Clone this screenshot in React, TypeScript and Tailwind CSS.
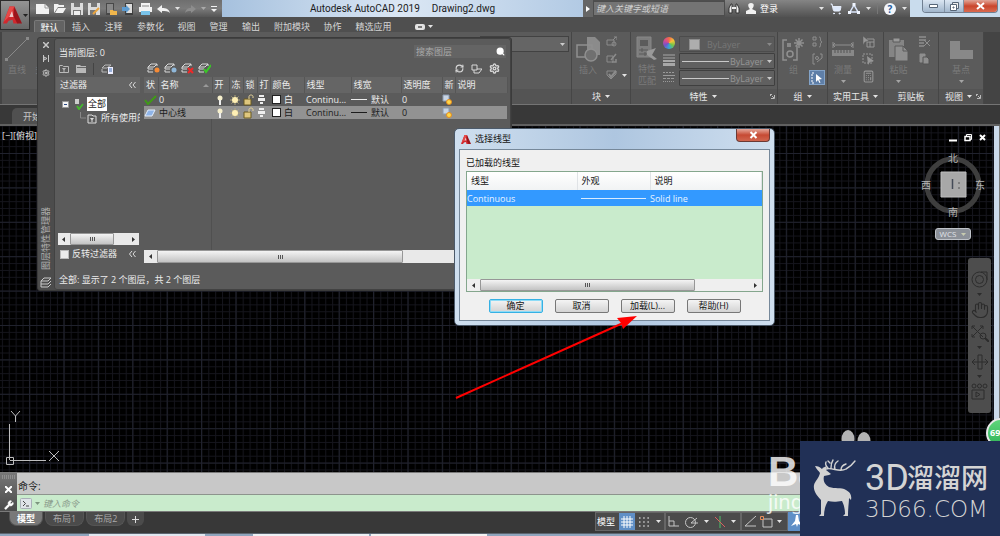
import type { ReactNode } from "react";
import { Calculator, Hand, RefreshCw, Search, Settings, ShoppingCart, Wrench } from "lucide-react";

const menuTabs = [
  { label: "默认", width: "w-[31px]" },
  { label: "插入", width: "w-[32px]" },
  { label: "注释", width: "w-[33px]" },
  { label: "参数化", width: "w-[41px]" },
  { label: "视图", width: "w-[31px]" },
  { label: "管理", width: "w-[33px]" },
  { label: "输出", width: "w-[32px]" },
  { label: "附加模块", width: "w-[50px]" },
  { label: "协作", width: "w-[31px]" },
  { label: "精选应用", width: "w-[51px]" },
];

const layerColumns = [
  { label: "状", width: "w-[14px]" },
  { label: "名称", width: "w-[54px]" },
  { label: "开", width: "w-[17px]" },
  { label: "冻", width: "w-[14px]" },
  { label: "锁", width: "w-[14px]" },
  { label: "打", width: "w-[13px]" },
  { label: "颜色", width: "w-[34px]" },
  { label: "线型", width: "w-[47px]" },
  { label: "线宽", width: "w-[50px]" },
  { label: "透明度", width: "w-[41px]" },
  { label: "新", width: "w-[13px]" },
  { label: "说明", width: "w-[52px]" },
];

const layers = [
  { name: "0", current: true },
  { name: "中心线", current: false },
];

type IconProps = { w: number; h: number; children: ReactNode; className?: string };

const Icon = ({ w, h, children, className = "" }: IconProps) => (
  <svg width={w} height={h} viewBox={`0 0 ${w} ${h}`} fill="none" stroke="currentColor" className={`shrink-0 ${className}`} aria-hidden="true">
    {children}
  </svg>
);

const Caret = ({ className = "text-[#e4e4e4]" }: { className?: string }) => (
  <Icon w={5} h={3} className={className}>
    <path d="M0 0h5L2.5 3z" fill="currentColor" stroke="none" />
  </Icon>
);

const AutocadMark = ({ className = "" }: { className?: string }) => (
  <svg viewBox="0 0 20 20" className={className} aria-hidden="true">
    <path d="M0 19 7 1h5l4 18h-5l-1-4-4 1-2 3z" fill="#d0282e" />
    <path d="M12 1 20 19h-5l-4-8z" fill="#9b151c" />
    <path d="m6.500 12 3-7 1.500 7z" fill="#efc4c4" />
    <path d="M7 1h5L6 12 1 17z" fill="#e64a48" />
  </svg>
);

/* ---------- Title bar ---------- */

const QuickAccess = () => (
  <div className="flex h-full w-[192px] items-center gap-[5px] bg-gradient-to-b from-[#6f6f6f] via-[#7b7b7b] to-[#565656] pl-[6px] text-[#f2f2f2]">
    <button aria-label="新建">
      <Icon w={13} h={11}><path d="M0 1h9l4 4v6H0z" fill="currentColor" stroke="none" /><path d="M9 1v4h4" stroke="#999" /></Icon>
    </button>
    <button aria-label="打开">
      <Icon w={12} h={11}><path d="M0 1h4l1 1h5v2H4L0 10z" fill="currentColor" stroke="none" /><path d="M4 5h8l-3 5H1z" fill="currentColor" stroke="none" /></Icon>
    </button>
    <button aria-label="保存">
      <Icon w={12} h={12}><path d="M0 0h12v12H0z" fill="#dcdcdc" stroke="none" /><path d="M3 0h6v4H3zM2 7h8v5H2z" fill="#777" stroke="none" /><path d="M3 8h6v4H3z" fill="#eee" stroke="none" /></Icon>
    </button>
    <button aria-label="另存为">
      <Icon w={12} h={12}><path d="M0 0h12v12H0z" fill="#dcdcdc" stroke="none" /><path d="M3 0h6v4H3zM2 7h6v5H2z" fill="#777" stroke="none" /><path d="m5 11 6-6" stroke="#e8a33e" strokeWidth="2" /></Icon>
    </button>
    <button aria-label="从移动设备打开">
      <Icon w={12} h={12}><path d="M1 0h8v12H1z" fill="#484848" stroke="none" /><path d="M2 1h6v9H2z" fill="#888" stroke="none" /><path d="M5 7h3l1 1h3v4H5z" fill="#f0b64c" stroke="none" /></Icon>
    </button>
    <button aria-label="保存到移动设备">
      <Icon w={12} h={12}><path d="M3 0h8v12H3z" fill="#3f3f3f" stroke="none" /><path d="M4 1h6v9H4z" fill="#ddd" stroke="none" /><path d="M0 4h4V2l4 4-4 4V8H0z" fill="#5d9bd0" stroke="none" /></Icon>
    </button>
    <button aria-label="打印">
      <Icon w={13} h={12}><path d="M2 0h9v4H2zM0 4h13v5H0z" fill="currentColor" stroke="none" /><path d="M2 8h9v4H2z" fill="#79c3ea" stroke="none" /><path d="M3 3h7" stroke="#888" /></Icon>
    </button>
    <button aria-label="放弃">
      <Icon w={13} h={8}><path d="m0 4 5-4v3c4 0 7 1 8 5-2-2-5-2-8-2v2z" fill="currentColor" stroke="none" /></Icon>
    </button>
    <Caret />
    <button aria-label="重做">
      <Icon w={11} h={8} className="text-[#8d8d8d]"><path d="m11 4-5-4v3C3 3 1 4 0 8c2-2 3-2 6-2v2z" fill="currentColor" stroke="none" /></Icon>
    </button>
    <Caret className="text-[#aaa]" />
    <Icon w={6} h={6}><path d="M0 .500h6" /><path d="M0 3h6L3 6z" fill="currentColor" stroke="none" /></Icon>
  </div>
);

const TitleBar = () => (
  <div className="flex h-[17px] items-center">
    <QuickAccess />
    <div className="flex h-full flex-1 items-center justify-center gap-[12px] bg-gradient-to-r from-[#a6c1de] via-[#dbe7f4] to-[#b2cae4] text-[10px] leading-[17px] text-[#1b1b1b] [font-family:Roboto,sans-serif]">
      <span>Autodesk AutoCAD 2019</span>
      <span>Drawing2.dwg</span>
    </div>
    <button aria-label="展开搜索" className="flex h-full w-[10px] items-center justify-center bg-[#666]">
      <Icon w={4} h={6}><path d="M0 0v6l4-3z" fill="#fff" stroke="none" /></Icon>
    </button>
    <input aria-label="搜索" placeholder="键入关键字或短语" className="h-[15px] w-[132px] border border-[#4d4d4d] bg-[#747474] pl-[2px] text-[9px] italic leading-[13px] text-white placeholder:text-[#d2d2d2]" />
    <div className="flex h-full w-[185px] items-center gap-[6px] bg-gradient-to-b from-[#858585] to-[#525252] px-[3px] text-white">
      <Icon w={12} h={11}><path d="M1 10V5l2-4h1v9zM11 10V5L9 1H8v9z" fill="#eee" stroke="#333" /><path d="M4 5h4" stroke="#eee" strokeWidth="2" /></Icon>
      <button className="flex items-center gap-[4px] text-[9px] leading-[15px]">
        <Icon w={10} h={11}><path d="M5 0c4 0 3 4 1 6l4 2v3H0V8l4-2C2 4 1 0 5 0z" fill="#f1f1f1" stroke="none" /></Icon>
        登录
      </button>
      <span className="flex-1" />
      <Caret />
      <ShoppingCart size={12} fill="#dfe9fa" className="text-[#e6edfb]" />
      <Icon w={12} h={11}><path d="M6 2 2 9h8z" stroke="#dbe6fb" strokeWidth="1.500" /><path d="M4.500 0h3v3h-3zM0 8h3v3H0zM9 8h3v3H9z" fill="#f0f5ff" stroke="none" /></Icon>
      <Caret />
      <span className="h-[11px] w-px bg-[#777]" />
      <button aria-label="帮助" className="flex h-[12px] w-[12px] items-center justify-center rounded-full bg-[#f3f6fb] text-[10px] font-bold leading-[12px] text-[#2a5c9c]">?</button>
      <Caret />
    </div>
    <div className="flex h-full w-[90px] items-start justify-end bg-[#c9dced] pr-[2px]">
      <div className="flex h-[13px] overflow-hidden rounded-b-[4px] border border-t-0 border-[#707f91]">
        <button aria-label="最小化" className="flex w-[21px] items-center justify-center bg-gradient-to-b from-[#dbe6f2] to-[#a1b6cc]">
          <Icon w={9} h={4}><path d="M.500.500h8v3h-8z" fill="#fff" stroke="#566577" /></Icon>
        </button>
        <button aria-label="还原" className="flex w-[19px] items-center justify-center border-l border-[#8293a5] bg-gradient-to-b from-[#dbe6f2] to-[#a1b6cc]">
          <Icon w={9} h={9}><path d="M2.500.500h6v6h-6z" fill="#eee" stroke="#566577" /><path d="M.500 2.500h6v6h-6z" fill="#fff" stroke="#566577" /><path d="M3 5h1v1H3z" stroke="#566577" /></Icon>
        </button>
        <button aria-label="关闭" className="flex w-[34px] items-center justify-center border-l border-[#8293a5] bg-gradient-to-b from-[#e0a598] via-[#c9452c] to-[#d96a50]">
          <Icon w={9} h={8}><path d="m1 1 7 6M8 1 1 7" stroke="#fff" strokeWidth="2" /></Icon>
        </button>
      </div>
    </div>
  </div>
);

const MenuTabs = () => (
  <nav className="flex h-[16px] items-end bg-[#4f4f4f] pl-[4px] text-[9px] leading-[13px] text-[#d6d6d6]">
    {menuTabs.map((tab, i) => (
      <button
        key={tab.label}
        className={`${tab.width} h-[13px] shrink-0 whitespace-nowrap ${i === 0 ? "rounded-t-[2px] border border-b-0 border-[#7a7a7a] bg-[#636363] leading-[11px] text-white" : ""}`}
      >
        {tab.label}
      </button>
    ))}
    <button aria-label="功能区选项" className="ml-[16px] flex h-[13px] items-center gap-[3px]">
      <Icon w={10} h={6}><rect width="10" height="6" rx="2" fill="#e3e3e3" stroke="none" /><path d="M3 2h4v2H3z" fill="#777" stroke="none" /></Icon>
      <Caret />
    </button>
  </nav>
);

/* ---------- Ribbon ---------- */

type PanelProps = { title: string; width: string; caret?: boolean; launcher?: boolean; children: ReactNode };

const RibbonPanel = ({ title, width, caret = true, launcher = false, children }: PanelProps) => (
  <section className={`${width} flex shrink-0 flex-col border-r border-[#464646] bg-[#5b5b5b]`}>
    <div className="flex flex-1 gap-[4px] px-[4px] pt-[4px] text-[9px] leading-[12px] text-[#787878]">{children}</div>
    <div className="flex h-[15px] items-center justify-center gap-[4px] whitespace-nowrap bg-[#545454] text-[9px] leading-[14px] text-[#e8e8e8]">
      {launcher && <span className="flex-1" />}
      {title}
      {caret && <Caret />}
      {launcher && (
        <span className="flex flex-1 justify-end pr-[2px]">
          <Icon w={5} h={5}><path d="M0 .500h2M.500 0v2M2 2l2 2M4.500 1v3.500H1" stroke="#bbb" /></Icon>
        </span>
      )}
    </div>
  </section>
);

const BigButton = ({ label, caret = false, children }: { label: string; caret?: boolean; children: ReactNode }) => (
  <button className="flex h-[50px] flex-col items-center text-[#909090]">
    <span className="flex h-[26px] items-center">{children}</span>
    <span className="mt-[2px] whitespace-nowrap text-[#7a7a7a]">{label}</span>
    {caret && <span className="mt-[4px]"><Caret className="text-[#a5a5a5]" /></span>}
  </button>
);

const LineSelect = ({ label }: { label: string }) => (
  <div className="flex h-[16px] items-center gap-[1px] rounded-[1px] border border-[#3f3f3f] bg-[#606060] pl-[2px] pr-[2px]">
    <span className="h-px w-[47px] shrink-0 bg-[#c9c9c9]" />
    <select aria-label={label} className="min-w-0 flex-1 appearance-none bg-transparent text-[9px] leading-[13px] text-[#969696]">
      <option>ByLayer</option>
    </select>
    <Caret className="text-[#c9c9c9]" />
  </div>
);

const Ribbon = () => (
  <div className="flex h-[73px] border-b border-[#747474] bg-[#444] pl-[2px] pr-[16px]">
    <section className="flex min-w-0 flex-1 flex-col overflow-hidden bg-[#5b5b5b]">
      <div className="flex flex-1 gap-[6px] px-[3px] pt-[4px] text-[9px] leading-[12px] text-[#7a7a7a]">
        <BigButton label="直线">
          <Icon w={24} h={25} className="text-[#8a8a8a]"><path d="M2 22 22 2" /><path d="M0 21h3v3H0zM21 0h3v3h-3z" fill="currentColor" stroke="none" /></Icon>
        </BigButton>
        <BigButton label="多段线">
          <Icon w={24} h={25} className="text-[#8a8a8a]"><path d="M2 18h10c8 0 8-14 0-14" /></Icon>
        </BigButton>
      </div>
      <div className="h-[15px] bg-[#545454]" />
    </section>
    <section className="flex w-[94px] shrink-0 flex-col border-r border-[#464646] bg-[#5b5b5b]">
      <div className="flex-1 px-[2px] pt-[4px]">
        <div className="flex h-[16px] items-center border border-[#424242] bg-[#656565] px-[3px]">
          <select aria-label="图层" className="min-w-0 flex-1 appearance-none bg-transparent text-[9px]"><option /></select>
          <Caret className="text-[#ccc]" />
        </div>
      </div>
      <div className="h-[15px] bg-[#545454]" />
    </section>
    <RibbonPanel title="块" width="w-[59px]">
      <BigButton label="插入">
        <Icon w={24} h={25}><path d="M11 0h8l5 5v13H11z" fill="#8b8b8b" stroke="none" /><path d="M1 8h15v12H1z" strokeWidth="1.500" /><circle cx="15" cy="18" r="6" fill="#707070" strokeWidth="1.500" /></Icon>
      </BigButton>
      <div className="flex flex-col items-start gap-[6px] pl-[2px] text-[#8c8c8c]">
        <Icon w={11} h={11}><path d="M1 4h7v5H1zM7 4l3-3M8 1h3v3" /><circle cx="8" cy="8" r="2" /></Icon>
        <Icon w={11} h={11}><path d="M1 3h6v6H1z" /><path d="m5 7 5-6M6 9h4V6" strokeWidth="1.500" /></Icon>
        <span className="flex items-center gap-[5px]">
          <Icon w={11} h={11}><path d="M1 1h9v3L5 9 1 5z" /><path d="m3 4 2 3 5-6" strokeWidth="2" /></Icon>
          <Caret />
        </span>
      </div>
    </RibbonPanel>
    <RibbonPanel title="特性" width="w-[147px]" launcher>
      <button className="flex w-[24px] shrink-0 flex-col items-center text-[#888]">
        <Icon w={22} h={24}><path d="M1 1h14v20H1z" fill="#7d7d7d" /><path d="M4 4h8v6H4z" fill="#5b5b5b" stroke="none" /><path d="M3 14h9M3 18h9M6 12v4M9 16v4" stroke="#5b5b5b" /><path d="m11 15 9-3-4 7 5 4-3 1-7-5z" fill="#999" stroke="none" /></Icon>
        <span className="mt-[3px] text-[#7a7a7a]">特性</span>
        <span className="text-[#7a7a7a]">匹配</span>
      </button>
      <div className="flex shrink-0 flex-col gap-[5px] pt-[1px]">
        <span className="h-[12px] w-[12px] rounded-full bg-[conic-gradient(#f26a4b,#f6c338,#73c54a,#36a5d8,#7353c9,#d44b91,#f26a4b)]" />
        <Icon w={12} h={12} className="text-[#a8a8a8]"><path d="M0 1h12M0 4h12" /><path d="M0 7h12" strokeWidth="2" /><path d="M0 10.500h12" strokeWidth="3" /></Icon>
        <Icon w={12} h={12} className="text-[#9a9a9a]"><path d="M0 1.500h12" strokeDasharray="2 1" /><path d="M0 4.500h12" /><path d="M0 7.500h12" strokeDasharray="3 1" /><path d="M0 10.500h12" strokeDasharray="1 1" /></Icon>
      </div>
      <div className="flex min-w-0 flex-1 flex-col gap-[1px] -mr-[2px]">
        <div className="flex h-[16px] items-center gap-[7px] rounded-[1px] border border-[#4c4c4c] pl-[9px] pr-[2px]">
          <span className="h-[11px] w-[11px] shrink-0 border border-[#8c8c8c] bg-[#adadad]" />
          <select aria-label="对象颜色" className="min-w-0 flex-1 appearance-none bg-transparent text-[9px] leading-[13px] text-[#777]">
            <option>ByLayer</option>
          </select>
          <Caret className="text-[#888]" />
        </div>
        <LineSelect label="线宽" />
        <LineSelect label="线型" />
      </div>
    </RibbonPanel>
    <RibbonPanel title="组" width="w-[50px]">
      <BigButton label="组">
        <Icon w={23} h={25}><path d="M5 3H1v20h4M11 23h4V9" strokeWidth="1.500" /><path d="M5 6h4v4H5z" fill="#888" stroke="none" /><circle cx="8" cy="17" r="3" strokeWidth="1.500" /><path d="M17 1v10M12 6h10M13.500 2.500l7 7M20.500 2.500l-7 7" strokeWidth="1.500" /></Icon>
      </BigButton>
      <div className="flex flex-col items-center gap-[5px] text-[#8f8f8f]">
        <Icon w={11} h={12}><path d="M1 1h3v3H1zM1 7h3v3H1zM7 1c3 0 0 4 3 5-3 1 0 5-3 5" /></Icon>
        <Icon w={11} h={12}><path d="M3 1H1v10h2M8 1h2v4M5 9l5-4" /><circle cx="5" cy="5" r="1.500" /></Icon>
        <span className="flex h-[15px] w-[16px] items-center justify-center border border-[#83a3c8] bg-[#5f7fa8] text-white">
          <Icon w={12} h={12}><path d="M3 1H1v10h2" strokeDasharray="2 1" /><path d="m5 2 6 5-3 .500 1.500 3-1 .500-1.500-3L5 10z" fill="currentColor" stroke="none" /></Icon>
        </span>
      </div>
    </RibbonPanel>
    <RibbonPanel title="实用工具" width="w-[56px]">
      <BigButton label="测量" caret>
        <Icon w={22} h={14}><path d="M1 0v6M21 0v6M1 3h20M3 1 1 3l2 2M19 1l2 2-2 2" /><path d="M0 8h22v6H0z" fill="#888" stroke="none" /><path d="M3 8v3M6 8v3M9 8v3M12 8v3M15 8v3M18 8v3" stroke="#555" /></Icon>
      </BigButton>
      <div className="flex flex-col items-center gap-[5px] pl-[4px] text-[#979797]">
        <Icon w={13} h={12}><path d="M5 3h7v8H5zM5 6h7M8 6v5" /><path d="m1 0 6 5-4 1-2 3z" fill="currentColor" stroke="#5b5b5b" strokeWidth=".5" /></Icon>
        <Icon w={13} h={12}><path d="M1 1h9v9H1z" strokeDasharray="2 1" /><path d="m5 3 7 5-4 1-2 3z" fill="currentColor" stroke="none" /></Icon>
        <Calculator size={13} />
      </div>
    </RibbonPanel>
    <RibbonPanel title="剪贴板" width="w-[55px]" caret={false}>
      <BigButton label="粘贴" caret>
        <Icon w={21} h={25}><path d="M1 3h15v17H1z" fill="#858585" stroke="none" /><path d="M5 1h7v4H5z" fill="#999" stroke="#5b5b5b" /><path d="M7 9h8l5 5v10H7z" fill="#8f8f8f" stroke="#5b5b5b" /><path d="M15 9v5h5" stroke="#5b5b5b" /></Icon>
      </BigButton>
      <div className="flex flex-col gap-[5px] pl-[6px] text-[#8f8f8f]">
        <Icon w={12} h={12}><path d="M0 1h7M0 4h7M0 7h5M0 10h5" strokeWidth="1.500" /><path d="m5 4 6 6M11 4 5 10" /></Icon>
        <Icon w={11} h={12}><path d="M1 1h5v8H1z" fill="currentColor" /><path d="M4 4h4l2 2v5H4z" fill="currentColor" stroke="#555" /></Icon>
      </div>
    </RibbonPanel>
    <RibbonPanel title="视图" width="w-[45px]" launcher>
      <div className="flex flex-1 justify-center">
        <BigButton label="基点" caret>
          <Icon w={24} h={19}><path d="M1 1h10v9h13v9H1z" fill="#888" stroke="none" /></Icon>
        </BigButton>
      </div>
    </RibbonPanel>
  </div>
);

/* ---------- Layer palette ---------- */

const Stack = ({ mark }: { mark: ReactNode }) => (
  <Icon w={13} h={11} className="text-[#dadada]">
    <path d="M4 1h6L7 4H1zM1 6h5M1 9h5M7 4l3-3v2M1 4v2M1 7v2" />
    {mark}
  </Icon>
);

const ScrollThumb = ({ className }: { className: string }) => (
  <div className={`${className} flex h-full items-center justify-center rounded-[1px] border border-[#979797] bg-gradient-to-b from-[#f4f4f4] to-[#c3c3c3]`}>
    <Icon w={5} h={4}><path d="M.500 0v4M2.500 0v4M4.500 0v4" stroke="#555" /></Icon>
  </div>
);

const ArrowLeft = () => <Icon w={3} h={5}><path d="M3 0v5L0 2.500z" fill="#333" stroke="none" /></Icon>;
const ArrowRight = () => <Icon w={3} h={5}><path d="M0 0v5l3-2.500z" fill="#333" stroke="none" /></Icon>;

const LayerFilters = () => (
  <div className="flex w-[84px] shrink-0 flex-col overflow-hidden">
    <div className="flex h-[16px] items-center justify-between bg-[#656565] px-[4px] leading-[14px]">
      过滤器
      <Icon w={7} h={6}><path d="M3 0 .500 3 3 6M6.500 0 4 3l2.500 3" stroke="#ddd" /></Icon>
    </div>
    <ul className="flex flex-1 flex-col pt-[4px]">
      <li className="flex h-[14px] items-center gap-[3px] pl-[6px]">
        <Icon w={7} h={7}><path d="M.500.500h6v6h-6z" fill="#f3f3f3" stroke="#999" /><path d="M2 3.500h3" stroke="#2b4a86" /></Icon>
        <Icon w={12} h={12}><path d="M3 1h4v5H3z" fill="#ccc" stroke="none" /><path d="m5 8 2 3 4-5" stroke="#45b52e" strokeWidth="2" /></Icon>
        <span className="h-[14px] bg-white px-[1px] leading-[13px] text-[#222]">全部</span>
      </li>
      <li className="flex h-[14px] items-center gap-[4px] whitespace-nowrap pl-[24px]">
        <Icon w={17} h={12}><path d="M.500 0v6H6" stroke="#888" /><path d="M8 3h4l1 1h3v7H8z" stroke="#ddd" /><path d="M10 6h4l-1.500 2v2h-1V8z" fill="#ddd" stroke="none" /></Icon>
        所有使用的
      </li>
    </ul>
    <div className="ml-[2px] mr-[1px] flex h-[12px] items-center bg-[#e9e9e9] px-[4px]">
      <ArrowLeft />
      <ScrollThumb className="ml-[5px] w-[44px]" />
      <span className="flex-1" />
      <ArrowRight />
    </div>
    <div className="flex h-[18px] items-center justify-between px-[4px]">
      <label className="flex items-center gap-[3px] leading-[14px]">
        <input type="checkbox" className="h-[9px] w-[9px] appearance-none border border-[#bbb] bg-[#ececec]" />
        反转过滤器
      </label>
      <Icon w={7} h={6}><path d="M3 0 .500 3 3 6M6.500 0 4 3l2.500 3" stroke="#ddd" /></Icon>
    </div>
  </div>
);

const LayerTable = () => (
  <div className="flex w-[363px] flex-col">
    <table className="w-[363px] table-fixed border-collapse text-left">
      <thead>
        <tr className="h-[16px] bg-[#656565]">
          {layerColumns.map((col) => (
            <th key={col.label} className={`${col.width} overflow-hidden whitespace-nowrap border-r border-[#565656] p-0 pl-[2px] font-normal leading-[14px]`}>
              {col.label === "名称" ? (
                <span className="flex items-center justify-between pr-[3px]">
                  {col.label}
                  <Icon w={6} h={3}><path d="M0 3h6L3 0z" fill="#999" stroke="none" /></Icon>
                </span>
              ) : col.label}
            </th>
          ))}
        </tr>
      </thead>
      <tbody>
        {layers.map((layer) => (
          <tr key={layer.name} className={`h-[13px] leading-[13px] [&>td]:overflow-hidden [&>td]:whitespace-nowrap [&>td]:p-0 [&_svg]:block ${layer.current ? "" : "bg-[#929292] text-[#1c1c1c]"}`}>
            <td>
              {layer.current ? (
                <Icon w={13} h={10}><path d="m1 5 3 4 8-8" stroke="#3f9a17" strokeWidth="2" /></Icon>
              ) : (
                <Icon w={12} h={8}><path d="M4 1h7L8 7H1z" fill="#8fb4e8" stroke="#e5eefb" /></Icon>
              )}
            </td>
            <td><span className="pl-[1px]">{layer.name}</span></td>
            <td>
              <Icon w={17} h={12}><circle cx="8" cy="4" r="2.500" fill="#f6efcc" stroke="none" /><path d="M7 6h2v5H7z" fill="#eee" stroke="none" /></Icon>
            </td>
            <td>
              <Icon w={13} h={12}><path d="M6 1v10M1 6h10M2.500 2.500l7 7M9.500 2.500l-7 7" stroke="#b3a97c" /><circle cx="6" cy="6" r="3" fill="#fff0b4" stroke="none" /></Icon>
            </td>
            <td>
              <Icon w={12} h={12}><path d="M1 5h7v6H1z" fill="#dfc77e" stroke="#6b5a22" /><path d="M6 5V2.500c0-2 4-2 4 0V4" stroke="#e8d59a" /></Icon>
            </td>
            <td>
              <Icon w={10} h={11}><path d="M2 1h5v2H2zM1 4h7v3H1zM3 8h3v2H3z" fill="#eee" stroke="none" /></Icon>
            </td>
            <td>
              <span className="flex items-center gap-[3px] pl-[2px]">
                <span className="h-[9px] w-[9px] border border-[#222] bg-white" />白
              </span>
            </td>
            <td><span className="pl-[2px]">Continu...</span></td>
            <td>
              <span className="flex items-center gap-[4px]"><span className="h-px w-[16px] bg-current" />默认</span>
            </td>
            <td><span className="pl-[1px]">0</span></td>
            <td>
              <Icon w={12} h={11}><path d="M1 1h6v6H1z" fill="#c9d5e4" stroke="#8c9bb0" /><circle cx="7" cy="8" r="2.500" fill="#ffd84a" stroke="#e58d1e" /></Icon>
            </td>
            <td />
          </tr>
        ))}
      </tbody>
    </table>
    <div className="ml-[67px] flex-1 border-l border-[#505050]" />
    <div className="flex h-[13px] items-center bg-[#e9e9e9] pl-[5px]">
      <ArrowLeft />
      <ScrollThumb className="ml-[5px] w-[246px]" />
    </div>
  </div>
);

const LayerPalette = () => (
  <aside className="absolute left-[37px] top-[37px] flex h-[254px] w-[475px] rounded-[3px] border border-[#3b3b3b] bg-[#4c4c4c] text-[9px] text-[#ececec]">
    <div className="flex w-[16px] shrink-0 flex-col items-center gap-[7px] pb-[2px] pt-[4px] text-[#c8c8c8]">
      <button aria-label="关闭选项板"><Icon w={6} h={6}><path d="m0 0 6 6M6 0 0 6" strokeWidth="1.500" /></Icon></button>
      <button aria-label="自动隐藏"><Icon w={6} h={7}><path d="M.500 0v7M5.500 0v7M1 2l3 1.500L1 5z" /></Icon></button>
      <button aria-label="特性"><Settings size={8} strokeWidth={3} /></button>
      <span className="flex-1" />
      <span className="rotate-180 leading-[12px] text-[#b0b0b0] [text-orientation:sideways] [writing-mode:vertical-rl]">图层特性管理器</span>
      <Icon w={12} h={11}><path d="M4 1h7L8 4H1zM1 7h7l3-3M1 10h7l3-3M1 4v6" /></Icon>
    </div>
    <div className="flex min-w-0 flex-1 flex-col rounded-[3px] border border-[#424242] bg-[#5b5b5b] pr-[4px]">
      <div className="flex items-center justify-between pl-[4px] pt-[4px]">
        <span className="pt-[3px] leading-[14px]">当前图层: 0</span>
        <div className="flex h-[13px] w-[92px] items-center bg-[#646464] pr-px">
          <input aria-label="搜索图层" placeholder="搜索图层" className="h-full min-w-0 flex-1 bg-transparent pl-[2px] leading-[13px] placeholder:text-[#aaa]" />
          <Search size={9} strokeWidth={3} fill="#fff" className="text-white" />
        </div>
      </div>
      <div className="flex h-[17px] items-center pl-[4px] text-[#b9b9b9]">
        <div className="flex items-center gap-[7px]">
          <Icon w={10} h={9}><path d="M.500 1.500h3l1 1h5v6h-9z" /><path d="M3 4h4L5.500 6v2h-1V6z" fill="currentColor" stroke="none" /></Icon>
          <Icon w={10} h={9}><path d="M0 1h4l1 1h5v7H0z" fill="currentColor" stroke="none" /><path d="M1 3.500h9" stroke="#666" /></Icon>
          <span className="h-[12px] w-px bg-[#444]" />
          <Icon w={12} h={10}><path d="M4 1h6L6 4H1zM1 5v3h5" /><path d="M7 3h5v7H7z" fill="#eef" stroke="none" /><path d="M8 5h3M8 7h3" stroke="#4372b5" /></Icon>
        </div>
        <div className="ml-[34px] flex items-center gap-[4px]">
          <Stack mark={<circle cx="10" cy="7" r="2.500" fill="#f58a35" stroke="none" />} />
          <Stack mark={<circle cx="10" cy="7" r="2.500" fill="#8fb7d9" stroke="none" />} />
          <Stack mark={<path d="m7 5 5 5M12 5l-5 5" stroke="#f02828" strokeWidth="2" />} />
          <Stack mark={<path d="m6 6 2 3 5-7" stroke="#39c826" strokeWidth="2" />} />
        </div>
        <div className="ml-auto flex items-center gap-[7px] pr-[6px] text-[#d8d8d8]">
          <RefreshCw size={9} strokeWidth={3} />
          <Icon w={11} h={10}><path d="M1 1h5v5H1zM3 6v3h5l3-4H6" /></Icon>
          <Settings size={11} strokeWidth={3} />
        </div>
      </div>
      <div className="flex min-h-0 flex-1 gap-[4px] pl-[1px]">
        <LayerFilters />
        <LayerTable />
      </div>
      <p className="h-[26px] pl-[4px] pt-[10px] leading-[14px]">全部: 显示了 2 个图层，共 2 个图层</p>
    </div>
  </aside>
);

/* ---------- Linetype dialog ---------- */

const dialogButtons = ["确定", "取消", "加载(L)...", "帮助(H)"];

const LinetypeDialog = () => (
  <div role="dialog" aria-label="选择线型" className="absolute left-[454px] top-[128px] flex h-[198px] w-[321px] flex-col rounded-[5px] border border-[#4c5a6a] bg-gradient-to-r from-[#cfdfef] via-[#aec6e0] to-[#cfdfef] px-[4px] pb-[4px] text-[9px] text-[#151515]">
    <header className="flex h-[20px] items-start justify-between">
      <span className="flex h-full items-center gap-[4px] pl-[2px]"><AutocadMark className="h-[11px] w-[10px]" />选择线型</span>
      <button aria-label="关闭" className="flex h-[13px] w-[34px] items-center justify-center rounded-b-[4px] border border-t-0 border-[#6b3a35] bg-gradient-to-b from-[#e3a79b] via-[#c64a33] to-[#d0664f]">
        <Icon w={9} h={8}><path d="m1.500 1 6 6M7.500 1l-6 6" stroke="#fff" strokeWidth="2" /></Icon>
      </button>
    </header>
    <div className="flex min-h-0 flex-1 flex-col border border-[#76889a] bg-[#f0f0f0] px-[6px] pt-[6px]">
      <p className="h-[15px] leading-[14px]">已加载的线型</p>
      <div className="flex h-[121px] flex-col border border-[#84a68d] bg-[#c9ebcc]">
        <table className="w-full table-fixed border-collapse text-left">
          <thead>
            <tr className="h-[18px] bg-gradient-to-b from-white to-[#f1f3f4] [&>th]:border-r [&>th]:border-[#e0e3e6] [&>th]:p-0 [&>th]:font-normal">
              <th className="w-[110px]"><span className="pl-[4px]">线型</span></th>
              <th className="w-[73px]"><span className="pl-[4px]">外观</span></th>
              <th><span className="pl-[4px]">说明</span></th>
            </tr>
          </thead>
          <tbody>
            <tr className="h-[16px] bg-[#3399ff] leading-[15px] text-[#eaf4ff] [&>td]:p-0">
              <td>Continuous</td>
              <td><span className="ml-[4px] block h-px w-[65px] bg-[#d8ebff]" /></td>
              <td>Solid line</td>
            </tr>
          </tbody>
        </table>
        <span className="flex-1" />
        <div className="flex h-[12px] items-center bg-[#efefef] px-[5px]">
          <ArrowLeft />
          <ScrollThumb className="ml-[5px] w-[215px]" />
          <span className="flex-1" />
          <ArrowRight />
        </div>
      </div>
      <div className="flex justify-center gap-[12px] pt-[7px]">
        {dialogButtons.map((label, i) => (
          <button key={label} className={`h-[14px] w-[54px] rounded-[2px] border bg-gradient-to-b from-[#f4f4f4] to-[#d3d3d3] leading-[12px] ${i === 0 ? "border-[#36b0e3] shadow-[inset_0_0_0_1px_#8edcf7]" : "border-[#777]"}`}>
            {label}
          </button>
        ))}
      </div>
    </div>
  </div>
);

/* ---------- Drawing area ---------- */

const ViewCube = () => (
  <div className="absolute right-[8px] top-[24px] flex w-[78px] flex-col items-center gap-[6px]">
    <svg width="70" height="72" viewBox="0 0 70 72" fill="none" className="text-[10px] [font-family:'Noto_Sans_CJK_SC',sans-serif]">
      <circle cx="35" cy="35" r="26" stroke="#3e3e3e" strokeWidth="5" />
      <path d="M23 22h25v25H23z" fill="#a8a8a8" stroke="#bdbdbd" />
      <path d="M34.500 29v10" stroke="#444b57" strokeWidth="1.500" />
      <path d="M40 33h2M40 38h2" stroke="#555" />
      <g fill="#b4b4b4" textAnchor="middle">
        <text x="35" y="12">北</text>
        <text x="35" y="66">南</text>
        <text x="8" y="39">西</text>
        <text x="62" y="39">东</text>
      </g>
    </svg>
    <button className="flex h-[12px] w-[36px] items-center justify-center gap-[5px] rounded-[3px] border border-[#bfc3c9] bg-[#8b9098] text-[8px] leading-[10px] text-[#e0e3e8]">
      WCS <Caret className="text-[#c7cbb0]" />
    </button>
  </div>
);

const NavigationBar = () => (
  <div className="absolute right-[9px] top-[132px] flex h-[155px] w-[23px] flex-col items-center justify-between rounded-[3px] bg-[#4d4d4d] py-[13px] text-[#2c2c2c]">
    <Icon w={17} h={17}><circle cx="8.500" cy="8.500" r="7.500" /><circle cx="8.500" cy="8.500" r="4" /><path d="M10 1h6v8" /></Icon>
    <Caret className="text-[#2c2c2c]" />
    <Hand size={18} strokeWidth={1.5} />
    <Icon w={18} h={18}><path d="m1 2 11 11M12 2 1 13M1 5V2h3M9 2h3v3M1 10v3h3" /><circle cx="12" cy="12" r="3" /><path d="m14 14 4 4" strokeWidth="2" /></Icon>
    <Caret className="text-[#2c2c2c]" />
    <Icon w={16} h={16}><path d="M6 1h4v14H6zM1 8h14M3 5 0 8l3 3M13 5l3 3-3 3" /></Icon>
    <Caret className="text-[#2c2c2c]" />
    <Icon w={17} h={17}><circle cx="3" cy="3" r="2" /><circle cx="8.500" cy="3" r="2" /><circle cx="14" cy="3" r="2" /><path d="M1 7h12v9H1zM5 9v5l4-2.500z" /></Icon>
  </div>
);

const DrawingArea = () => (
  <main className="relative min-h-0 flex-1 overflow-hidden bg-black">
    <svg width="100%" height="100%" className="absolute inset-0" aria-hidden="true">
      <defs>
        <pattern id="minor" x="29.400" y="27" width="6.880" height="6.880" patternUnits="userSpaceOnUse">
          <path d="M.500 0v6.880M0 .500h6.880" stroke="#15151c" fill="none" />
        </pattern>
        <pattern id="major" x="29" y="27" width="34.400" height="34.400" patternUnits="userSpaceOnUse">
          <path d="M.500 0v34.400M0 .500h34.400" stroke="#20222d" fill="none" />
        </pattern>
      </defs>
      <rect width="100%" height="100%" fill="url(#minor)" />
      <rect width="100%" height="100%" fill="url(#major)" />
    </svg>
    <span className="absolute left-[2px] top-[3px] text-[9px] leading-[14px] text-[#e8e8e8]">[−][俯视]</span>
    <svg width="62" height="58" viewBox="0 0 62 58" fill="none" stroke="#bdbdbd" className="absolute bottom-[6px] left-[4px]" aria-hidden="true">
      <path d="M5.500 16v36M6 52.500h36M2.500 49.500h7v7h-7z" />
      <path d="m7 3 4.500 5L16 3M11.500 8v6M45 43l10 10M55 43 45 53" />
    </svg>
    <div className="absolute right-[14px] top-[7px] flex items-end gap-[7px] text-white">
      <Icon w={8} h={9}><path d="M0 7.500h8" strokeWidth="2" /></Icon>
      <Icon w={8} h={9}><path d="M2.500 1.500h5v5h-5z" /><path d="M1 3.500h5v4H1z" fill="#000" strokeWidth="1.500" /></Icon>
      <Icon w={7} h={9}><path d="m1 2 5 5M6 2 1 7" strokeWidth="2" /></Icon>
    </div>
    <ViewCube />
    <NavigationBar />
    <div className="absolute inset-y-0 right-0 w-[6px] border-r border-[#777] bg-[#cbdaeb]" />
    <div className="absolute -right-[16px] bottom-[24px] flex h-[30px] w-[30px] items-center rounded-full border-2 border-[#e8e8e8] bg-gradient-to-b from-[#5fd67b] to-[#2fb457] pl-[2px] text-[9px] font-bold text-white">69</div>
  </main>
);

/* ---------- Command line and status bar ---------- */

const CommandPanel = () => (
  <div className="flex h-[40px] border-y border-[#7a7a7a]">
    <div className="flex w-[17px] flex-col items-center gap-[7px] bg-gradient-to-b from-[#777] to-[#4b4b4b] pt-[2px] text-white">
      <Icon w={13} h={4}><path d="M0 1h13M0 3h13" stroke="#aaa" strokeDasharray="1 1" /></Icon>
      <Icon w={7} h={7}><path d="m0 0 7 7M7 0 0 7" strokeWidth="2" /></Icon>
      <Wrench size={10} fill="white" />
    </div>
    <div className="flex flex-1 flex-col">
      <p className="h-[22px] border-b border-[#8d948d] bg-[#c8c8c8] pl-[1px] pt-[6px] text-[10px] leading-[15px] text-[#222]">命令:</p>
      <div className="flex flex-1 items-center gap-[3px] bg-[#c9ebcc] pl-[3px]">
        <Icon w={12} h={11}><rect x=".5" y=".5" width="11" height="10" rx="1" fill="#dfe3e8" stroke="#aab0b8" /><path d="m3 3 2.500 2.500L3 8M6 8h3" stroke="#444" /></Icon>
        <Caret className="text-[#7c957e]" />
        <input aria-label="命令" placeholder="键入命令" className="h-full flex-1 bg-transparent text-[9px] italic leading-[15px] placeholder:text-[#8a9a8b]" />
      </div>
    </div>
  </div>
);

const layoutTabs = ["模型", "布局1", "布局2"];

const StatusBar = () => (
  <footer className="flex h-[21px] items-start bg-[#383838] text-[9px] text-[#a9a9a9]">
    <div className="flex pl-[9px]">
      {layoutTabs.map((tab, i) => (
        <button key={tab} className={`h-[14px] rounded-b-[8px] border border-t-0 border-[#555] px-[7px] leading-[13px] mr-[2px] ${i === 0 ? "bg-[#797979] font-bold text-white" : "bg-[#4b4b4b]"}`}>{tab}</button>
      ))}
      <button aria-label="新建布局" className="flex h-[14px] w-[17px] items-center justify-center rounded-b-[6px] bg-[#4b4b4b] text-[#ddd]">
        <Icon w={7} h={7}><path d="M3.500 0v7M0 3.500h7" /></Icon>
      </button>
    </div>
    <div className="ml-auto mr-[195px] flex h-[19px] items-center bg-[#4b4b4b] text-[#c6c6c6] [&>div]:flex [&>div]:h-full [&>div]:items-center [&>div]:border [&>div]:border-[#666]">
      <div className="w-[70px] gap-[4px] pl-px">
        <button className="whitespace-nowrap text-white">模型</button>
        <button aria-label="栅格" className="flex h-[17px] w-[16px] items-center justify-center bg-[#5f8fc6] text-white">
          <Icon w={12} h={12}><path d="M3 0v12M6 0v12M9 0v12M0 3h12M0 6h12M0 9h12" /></Icon>
        </button>
        <Icon w={10} h={10}><path d="M0 1h10M0 5h10M0 9h10" strokeWidth="1.500" strokeDasharray="1.500 2.700" /></Icon>
        <span className="pl-[3px]"><Caret /></span>
      </div>
      <div className="w-[76px] gap-[6px] pl-[2px]">
        <Icon w={11} h={11}><path d="M1 0v10h10M1 5h5v5" /></Icon>
        <Icon w={13} h={12}><circle cx="5.500" cy="6.500" r="5" /><path d="m6 7 6-5M6 7h7" /></Icon>
        <Caret />
        <Icon w={10} h={12}><path d="M5 0v12" stroke="#4cc36a" /><path d="m0 1 10 10" stroke="#d95f5f" /></Icon>
        <Caret />
      </div>
      <div className="w-[47px] gap-[4px] pl-[2px]">
        <Icon w={12} h={11}><path d="M12 0 1 10h11" /></Icon>
        <Icon w={13} h={12}><path d="M3 3h9v8H3z" /><path d="M.500.500h3v3h-3z" stroke="#e58b5b" /></Icon>
        <Caret />
      </div>
      <button aria-label="注释可见性" className="flex h-full w-[17px] items-center justify-center bg-[#5f8fc6] text-white">
        <Icon w={13} h={13}><path d="M6 0h2l1 6 4 5-5-2-1 3-1-3-5 2 4-5z" fill="currentColor" stroke="none" /></Icon>
      </button>
    </div>
  </footer>
);

const Taskbar = () => (
  <div className="flex h-[3px] gap-[2px] border-t border-[#5c6670] bg-[#8fa5bd]">
    <span className="w-[87px]" />
    <span className="w-[116px] bg-[#e1e8f0]" />
    <span className="w-[44px]" />
    <span className="w-[116px] bg-[#eef1f5]" />
    <span className="w-[116px] bg-[#f3f3f3]" />
  </div>
);

/* ---------- Watermarks ---------- */

const Deer = () => (
  <svg width="44" height="59" viewBox="0 0 44 59" fill="#d2d2d2" aria-hidden="true">
    <path d="M2 7c3 0 5 1 7 3 1-2 3-2 5-3l-1 4 5 4-2 1-5 1c-1 5 0 8 5 11 6 2 12 0 17 3 4 2 6 5 5 10l-2-2c0 5-1 9-1 18h-5l2-2c0-5-1-9-3-13-6 1-10 1-14 0-3 5-4 10-4 15H6l2-2V41C4 37 0 32 1 26c1-4 5-7 6-12C6 12 3 10 2 7z" />
    <path d="M13 10c7-2 13 4 20 0 4-2 6-4 9-8M15 9c-2-2-3-4-2-6M18 9c0-3 0-5 2-8M22 10c-1-3 0-6 3-8M28 11c0-3 2-5 5-6M17 4l-2-2" fill="none" stroke="#d2d2d2" strokeWidth="1.400" strokeLinecap="round" />
  </svg>
);

const Watermark = () => (
  <>
    <div className="absolute bottom-[21px] right-[172px] w-[60px] whitespace-nowrap text-white/80 [font-family:'Liberation_Sans',sans-serif]">
      <p className="h-[36px] text-[42px] font-bold leading-[38px]">Ba</p>
      <p className="h-[26px] font-['Noto_Sans'] text-[20px] leading-[26px]">jing</p>
    </div>
    <svg width="30" height="20" viewBox="0 0 30 20" className="absolute bottom-[87px] right-[129px]" fill="#b3b3b3" aria-hidden="true">
      <ellipse cx="7" cy="10" rx="6.500" ry="9" />
      <ellipse cx="23" cy="12" rx="6.500" ry="9" />
    </svg>
    <div className="absolute bottom-0 right-0 flex h-[95px] w-[200px] items-start gap-[8px] bg-[#213056] pl-[13px] pt-[18px] text-[#d4d4d4]">
      <Deer />
      <div className="whitespace-nowrap">
        <div className="flex h-[38px] items-center font-medium">
          <span className="w-[42px] text-[36px] font-normal leading-[38px] [font-family:Roboto,sans-serif]">3D</span>
          <span className="text-[27px] leading-[38px]">溜溜网</span>
        </div>
        <p className="font-['DejaVu_Sans'] text-[23px] font-extralight leading-[24px]">3D66.COM</p>
      </div>
    </div>
  </>
);

const App = () => {
  return (
    <div className="relative flex h-screen flex-col overflow-hidden bg-[#383838] [font-family:'Open_Sans','Noto_Sans_CJK_SC',sans-serif]">
      <div className="flex h-[32px] items-start bg-[#4f4f4f]">
        <button aria-label="应用程序菜单" className="flex h-[30px] w-[30px] items-center justify-center gap-[1px] border border-[#2c2c2c] bg-gradient-to-b from-[#949494] to-[#686868]">
          <AutocadMark className="h-[20px] w-[19px]" />
          <Caret className="text-[#222]" />
        </button>
        <div className="min-w-0 flex-1">
          <TitleBar />
          <MenuTabs />
        </div>
      </div>
      <Ribbon />
      <div className="flex h-[21px] items-end border-b-2 border-[#606060] pl-[12px]">
        <button className="h-[16px] rounded-t-[5px] bg-[#505050] px-[11px] text-[9px] leading-[15px] text-[#c4c4c4]">开始</button>
      </div>
      <DrawingArea />
      <CommandPanel />
      <StatusBar />
      <Taskbar />

      <LayerPalette />
      <LinetypeDialog />
      <svg width="184" height="86" viewBox="0 0 184 86" className="absolute left-[455px] top-[314px]" aria-hidden="true">
        <path d="M1 84 168 9" stroke="#f00" strokeWidth="2" />
        <path d="m182 2-20 2 4 5 2 6z" fill="#f00" />
      </svg>
      <Watermark />
    </div>
  );
};

export default App;
